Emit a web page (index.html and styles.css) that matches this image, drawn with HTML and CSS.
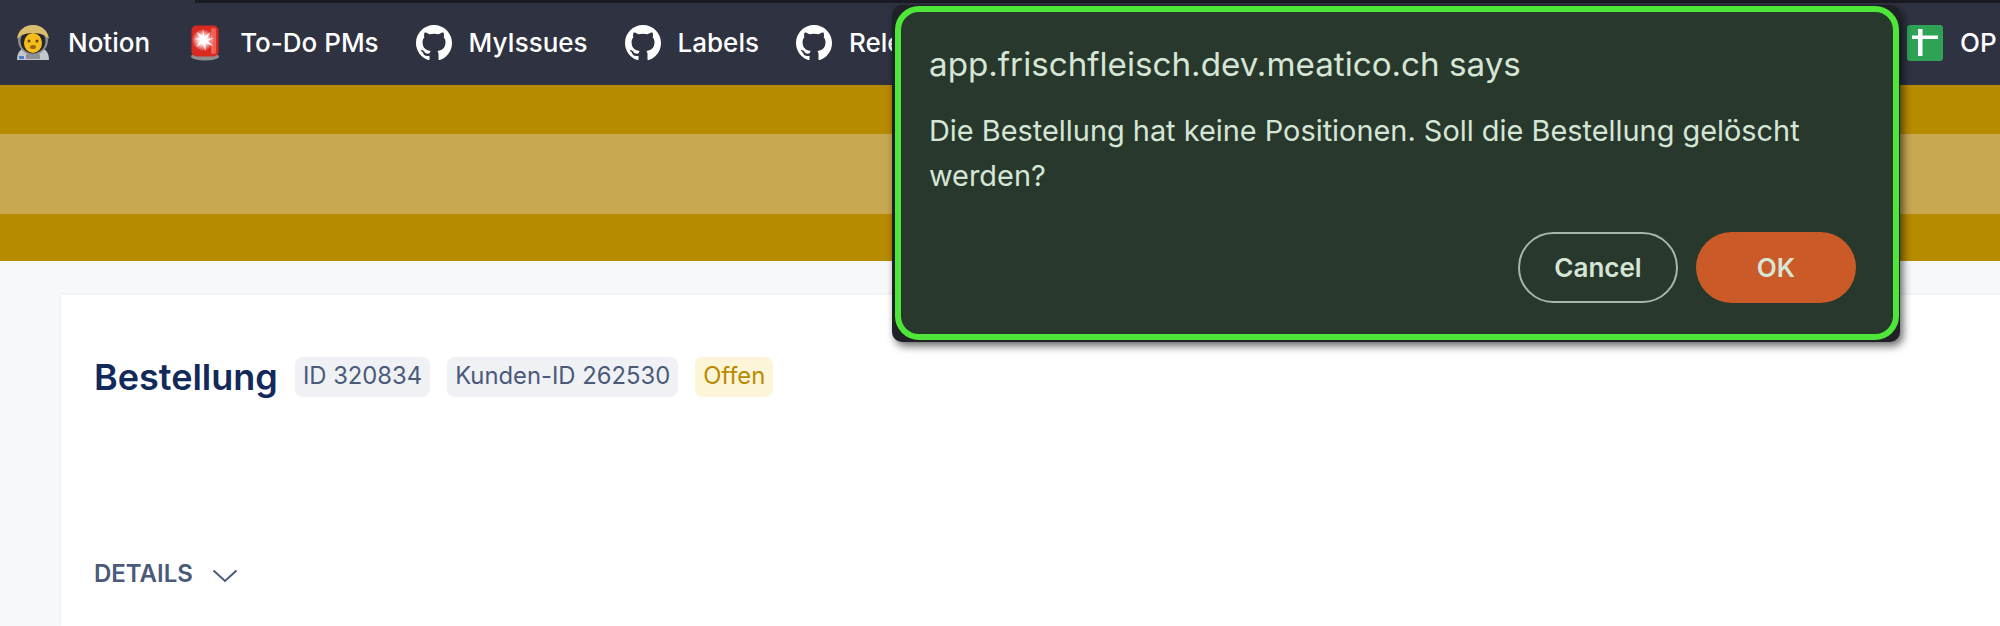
FILE: index.html
```html
<!DOCTYPE html>
<html lang="de">
<head>
<meta charset="utf-8">
<title>Bestellung</title>
<link rel="stylesheet" href="styles.css">
</head>
<body>
<nav class="bar">
  <a class="item">
    <svg class="icon" viewBox="0 0 36 36"><path d="M2 35c0-7 3-11 8-12h16c5 1 8 5 8 12z" fill="#c4c6cc"/><rect x="11" y="29" width="14" height="5" rx="1" fill="#8d9098"/><rect x="4" y="31" width="5" height="3" fill="#4a7fd0"/><circle cx="18" cy="15" r="15" fill="#8d8e90"/><circle cx="18" cy="16" r="12.500" fill="#26272c"/><path d="M2 14C3 5 10 0 18 0s15 5 16 14c-4-4-9-6-16-6S6 10 2 14z" fill="#d9bc6c"/><ellipse cx="18" cy="18" rx="9" ry="10" fill="#f5bd1c"/><circle cx="14" cy="16" r="1.500" fill="#6b4510"/><circle cx="22" cy="16" r="1.500" fill="#6b4510"/><ellipse cx="18" cy="22" rx="3" ry="2" fill="#9a6410"/></svg>
    <span>Notion</span>
  </a>
  <a class="item">
    <svg class="icon" viewBox="0 0 36 36"><defs><radialGradient id="glow"><stop offset="0" stop-color="#fff"/><stop offset=".45" stop-color="#ffd6d0"/><stop offset="1" stop-color="#ffd6d0" stop-opacity="0"/></radialGradient></defs><ellipse cx="18" cy="31.500" rx="14" ry="4" fill="#8f8f92"/><rect x="4.500" y="0.500" width="27" height="31" rx="5" fill="#d92a22"/><rect x="24" y="3" width="5" height="26" rx="2" fill="#ef6055"/><circle cx="16" cy="15" r="11" fill="url(#glow)"/><path d="M16 4l1.500 8 6-5-4 7 8-1-7 3 6 5-8-3 0 8-3-8-6 4 4-7-7-1 7-1-4-6 6 4z" fill="#fff"/></svg>
    <span>To-Do PMs</span>
  </a>
  <a class="item">
    <svg class="icon" viewBox="0 0 16 16"><use href="#gh"/></svg>
    <span>MyIssues</span>
  </a>
  <a class="item">
    <svg class="icon" viewBox="0 0 16 16"><use href="#gh"/></svg>
    <span>Labels</span>
  </a>
  <a class="item">
    <svg class="icon" viewBox="0 0 16 16"><use href="#gh"/></svg>
    <span>Releases</span>
  </a>
  <a class="item item-last">
    <svg class="icon" viewBox="0 0 36 36"><rect width="36" height="36" rx="3" fill="#2ea356"/><path d="M11 4h4.500v6.500H31V14H15.500v17H11V14H5v-3.500h6z" fill="#fff"/></svg>
    <span>OP</span>
  </a>
</nav>

<svg class="defs" aria-hidden="true"><defs><path id="gh" fill="#fff" d="M8 0C3.580 0 0 3.580 0 8c0 3.540 2.290 6.530 5.470 7.590.4.070.55-.17.55-.38 0-.19-.01-.82-.01-1.490-2.010.37-2.530-.49-2.690-.94-.09-.23-.48-.94-.82-1.130-.28-.15-.68-.52-.01-.53.63-.01 1.080.58 1.230.82.72 1.210 1.870.87 2.330.66.07-.52.28-.87.51-1.070-1.780-.2-3.640-.89-3.640-3.950 0-.87.31-1.590.82-2.150-.08-.2-.36-1.020.08-2.120 0 0 .67-.21 2.200.82.64-.18 1.320-.27 2-.27.68 0 1.360.09 2 .27 1.530-1.040 2.200-.82 2.200-.82.44 1.100.16 1.920.08 2.120.51.56.82 1.270.82 2.150 0 3.070-1.870 3.750-3.650 3.950.29.25.54.73.54 1.480 0 1.070-.01 1.930-.01 2.200 0 .21.15.46.55.38A8.013 8.013 0 0016 8c0-4.420-3.580-8-8-8z"/></defs></svg>

<div class="banner"><div class="band"></div></div>

<main class="page">
  <section class="card">
    <header class="head">
      <h1 class="title">Bestellung</h1>
      <span class="badge">ID 320834</span>
      <span class="badge">Kunden-ID 262530</span>
      <span class="badge badge-open">Offen</span>
    </header>
    <button class="toggle">
      <span>DETAILS</span>
      <svg class="chev" viewBox="0 0 26 14"><path d="M1.500 1.500L13 12 24.500 1.500" fill="none" stroke="#4a5a7a" stroke-width="2"/></svg>
    </button>
  </section>
</main>

<div class="frame">
  <div class="dialog" role="dialog">
    <h2 class="d-title">app.frischfleisch.dev.meatico.ch says</h2>
    <p class="d-msg">Die Bestellung hat keine Positionen. Soll die Bestellung gelöscht werden?</p>
    <div class="d-actions">
      <button class="btn btn-cancel">Cancel</button>
      <button class="btn btn-ok">OK</button>
    </div>
  </div>
</div>
</body>
</html>
```
FILE: styles.css
```css
* { box-sizing: border-box; }
html, body { margin: 0; }
body {
  position: relative;
  height: 626px;
  overflow: hidden;
  background: #f7f8fa;
  font-family: Inter, "Liberation Sans", sans-serif;
}
.defs { display: none; }

.bar {
  position: relative;
  display: flex;
  align-items: center;
  height: 85px;
  padding-left: 15px;
  gap: 37px;
  background: #2f3241;
  color: #fff;
  font: 500 26px/1 Inter, sans-serif;
  white-space: nowrap;
}
.bar::before {
  content: "";
  position: absolute;
  left: 195px;
  right: 0;
  top: 0;
  height: 3px;
  background: #191a22;
}
.item { display: flex; align-items: center; gap: 17px; }
.icon { width: 36px; height: 36px; flex: none; }
.item-last { margin-left: auto; width: 93px; overflow: hidden; }

.banner { height: 176px; padding-top: 49px; background: #b78b00; }
.band { height: 80px; background: #c8a850; }

.page { padding: 34px 0 0 61px; }
.card {
  height: 331px;
  padding: 62px 33px 0;
  background: #fff;
  box-shadow: 0 0 4px rgba(60, 70, 100, .08);
}
.head { display: flex; align-items: center; gap: 17px; height: 40px; }
.title { margin: 0; font-size: 36px; font-weight: 600; color: #12295a; }
.badge {
  padding: 0 8px;
  height: 40px;
  border-radius: 8px;
  background: #f0f1f4;
  color: #4a5a7a;
  font-size: 23.800px;
  line-height: 38px;
}
.badge-open { background: #fcf5d8; color: #b78b00; }
.toggle {
  display: flex;
  align-items: center;
  gap: 19px;
  margin-top: 165px;
  padding: 0;
  border: 0;
  background: none;
  color: #4a5a7a;
  font: 600 24px/1 Inter, sans-serif;
}
.chev { width: 26px; height: 14px; margin-top: 4px; }

.frame {
  position: absolute;
  left: 892px;
  top: 5px;
  width: 1008px;
  height: 337px;
  padding: 1px 1px 2px 3px;
  border-radius: 10px;
  background: #1f2126;
  box-shadow: 3px 4px 8px rgba(0, 0, 0, .6);
}
.dialog {
  height: 100%;
  padding: 30px 29px 0 28px;
  border: 6px solid #4fe63a;
  border-radius: 24px;
  background: #29382c;
  color: #d6e6d6;
}
.d-title { margin: 0; font-size: 33.200px; font-weight: 400; line-height: 44px; }
.d-msg { margin: 22px 0 0; width: 900px; font-size: 28.900px; line-height: 45px; }
.d-actions { display: flex; justify-content: flex-end; gap: 18px; margin: 34px 0 0; padding-right: 8px; }
.btn {
  width: 160px;
  height: 71px;
  border-radius: 36px;
  border: 2px solid #a9b5a9;
  background: transparent;
  color: #d6e6d6;
  font: 600 26px/1 Inter, sans-serif;
}
.btn-ok { border: 0; background: #cb5a29; }
```
